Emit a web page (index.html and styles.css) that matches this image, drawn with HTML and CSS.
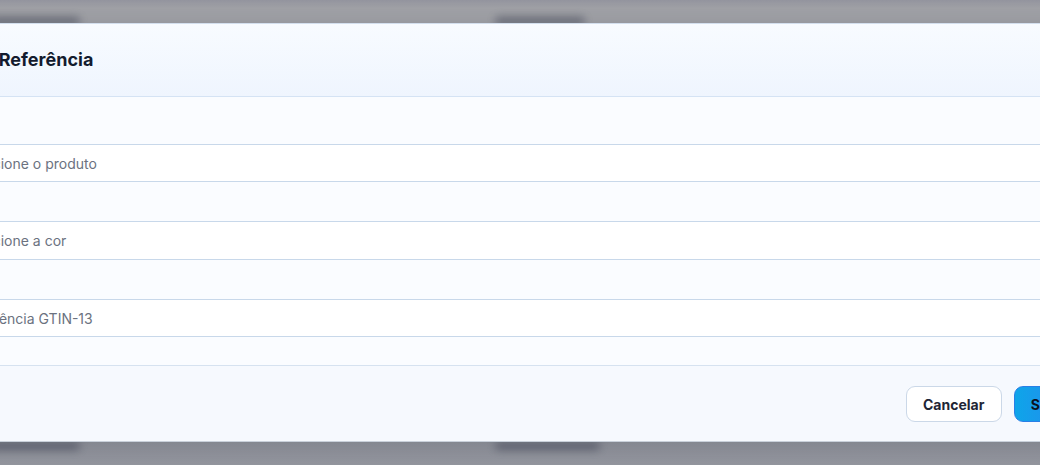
FILE: index.html
```html
<!DOCTYPE html>
<html lang="pt-BR">
<head>
  <meta charset="UTF-8">
  <meta name="viewport" content="width=device-width, initial-scale=1.0">
  <title>Nova Referência</title>
  <link rel="stylesheet" href="styles.css">
</head>
<body>
  <!-- page behind the overlay, blurred -->
  <div class="behind">
    <span class="ghost ghost-a"></span>
    <span class="ghost ghost-b"></span>
    <span class="ghost ghost-c"></span>
    <span class="ghost ghost-d"></span>
  </div>

  <div class="overlay">
    <div class="modal">
      <div class="modal-header">
        <h2 class="modal-title">Nova Referência</h2>
      </div>

      <div class="modal-body">
        <input class="field" type="text" placeholder="Selecione o produto">
        <input class="field field-mid" type="text" placeholder="Selecione a cor">
        <input class="field" type="text" placeholder="Referência GTIN-13">
      </div>

      <div class="modal-footer">
        <button class="btn btn-cancel">Cancelar</button>
        <button class="btn btn-save">Salvar</button>
      </div>
    </div>
  </div>
</body>
</html>
```

FILE: styles.css
```css
body {
  margin: 0;
  height: 465px;
  overflow: hidden;
  font-family: Inter, 'Noto Sans', sans-serif;
  background: linear-gradient(#94959f 0, #a1a2a7 8px, #a1a2a7 400px, #999ba3 465px);
  color: #111827;
}
.behind {
  position: absolute;
  inset: 0;
}
.ghost {
  position: absolute;
  height: 8px;
  background: #5b5e6c;
  border-radius: 4px;
  filter: blur(4px);
  opacity: 0.8;
}
.ghost-a { left: -10px; top: 17px; width: 90px; }
.ghost-b { left: 495px; top: 17px; width: 90px; }
.ghost-c { left: -10px; top: 442px; width: 90px; }
.ghost-d { left: 495px; top: 442px; width: 105px; }
.overlay {
  position: relative;
  padding-top: 23px;
}
.modal {
  width: 1184px;
  margin-left: -69px;
  border: 1px solid #d3dfee;
  border-bottom-color: #c9d0da;
  background: #fafcff;
  box-shadow: 0 10px 30px rgba(30, 41, 59, 0.25);
}
.modal-header {
  height: 72px;
  display: flex;
  align-items: center;
  padding: 0 17px;
  background: linear-gradient(#f8fbff, #eff5fe);
  border-bottom: 1px solid #d5e3f4;
}
.modal-title {
  margin: 0;
  font-size: 18px;
  font-weight: 700;
  color: #131b2e;
  padding-bottom: 1px;
}
.modal-body {
  display: flex;
  flex-direction: column;
  gap: 39px;
  padding: 47px 12px 28px;
}
.field {
  height: 38px;
  box-sizing: border-box;
  border: 1px solid #c8d8ea;
  border-radius: 8px;
  background: #fff;
  padding: 0 19px;
  font-family: inherit;
  font-size: 14px;
  color: #111827;
  outline: none;
}
.field-mid {
  height: 39px;
}
.field::placeholder {
  color: #6b7280;
}
.modal-footer {
  display: flex;
  justify-content: flex-end;
  gap: 12px;
  padding: 20px 25px 19px;
  border-top: 1px solid #d6e2f0;
  background: #f6f9fe;
}
.btn {
  height: 36px;
  padding: 0 16px;
  border-radius: 9px;
  font-family: inherit;
  font-size: 14px;
  font-weight: 700;
  cursor: pointer;
}
.btn-cancel {
  width: 96px;
  background: #fff;
  border: 1px solid #cbd8e8;
  color: #1e2535;
}
.btn-save {
  background: linear-gradient(90deg, #0ea5e9, #2f7ff0);
  border: 1px solid #2a7fe6;
  color: #0b1220;
}
```
